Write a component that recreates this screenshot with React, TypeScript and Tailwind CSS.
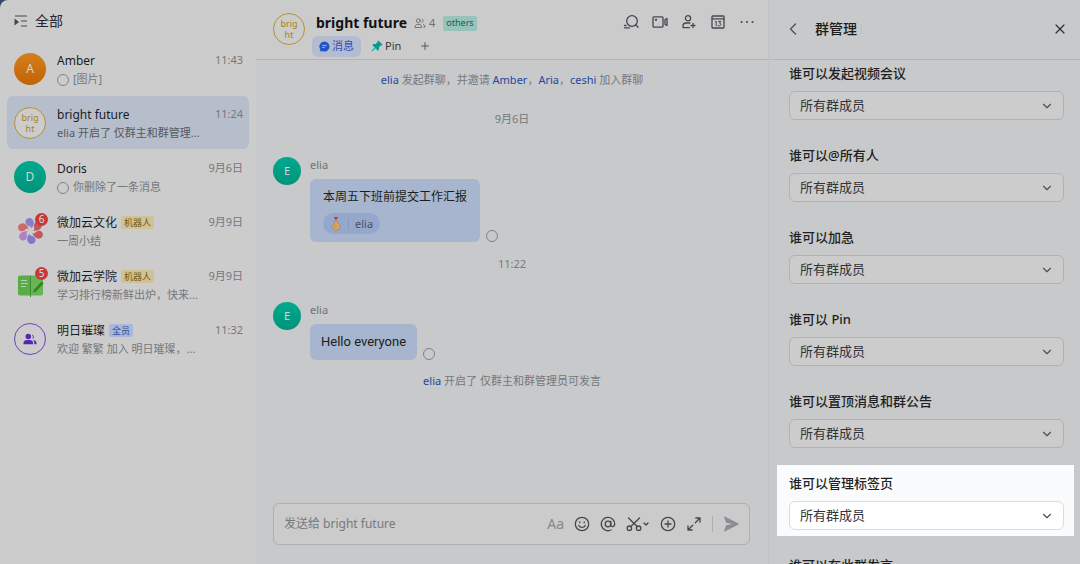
import type { ReactNode } from "react";
import { ChevronDown, ChevronLeft, Plus, X } from "lucide-react";

type Chat = {
  name: string;
  preview: string;
  time: string;
  avatar: ReactNode;
  tag?: string;
  tagClass?: string;
  badge?: number;
  ring?: boolean;
  active?: boolean;
};

const CHATS: Chat[] = [
  {
    name: "Amber",
    preview: "[图片]",
    time: "11:43",
    ring: true,
    avatar: <LetterAvatar letter="A" className="size-8 bg-linear-to-b from-[#d67e1c] to-[#c06400] text-xs" />,
  },
  {
    name: "bright future",
    preview: "elia 开启了 仅群主和群管理...",
    time: "11:24",
    active: true,
    avatar: <GroupAvatar />,
  },
  {
    name: "Doris",
    preview: "你删除了一条消息",
    time: "9月6日",
    ring: true,
    avatar: <LetterAvatar letter="D" className="size-8 bg-linear-to-b from-[#00aa8f] to-[#00937a] text-xs" />,
  },
  {
    name: "微加云文化",
    preview: "一周小结",
    time: "9月9日",
    tag: "机器人",
    tagClass: "bg-[#cfc296] text-[#71580c]",
    badge: 6,
    avatar: <FlowerLogo />,
  },
  {
    name: "微加云学院",
    preview: "学习排行榜新鲜出炉，快来...",
    time: "9月9日",
    tag: "机器人",
    tagClass: "bg-[#cfc296] text-[#71580c]",
    badge: 5,
    avatar: <BookLogo />,
  },
  {
    name: "明日璀璨",
    preview: "欢迎 繁繁 加入 明日璀璨，...",
    time: "11:32",
    tag: "全员",
    tagClass: "bg-[#a9b8d9] text-[#274a96]",
    avatar: <TeamAvatar />,
  },
];

const PERMISSIONS = [
  { id: "video", label: "谁可以发起视频会议" },
  { id: "mention", label: "谁可以@所有人" },
  { id: "urgent", label: "谁可以加急" },
  { id: "pin", label: "谁可以 Pin" },
  { id: "top", label: "谁可以置顶消息和群公告" },
  { id: "tabs", label: "谁可以管理标签页", spotlight: true },
  { id: "speak", label: "谁可以在此群发言" },
];

function LetterAvatar({ letter, className }: { letter: string; className: string }) {
  return (
    <span className={`flex shrink-0 items-center justify-center rounded-full text-[#d4d4d4] ${className}`}>
      {letter}
    </span>
  );
}

function GroupAvatar() {
  return (
    <span className="flex size-8 shrink-0 flex-col items-center justify-center rounded-full border border-[#b39332] bg-[#cccccc] text-[9px] leading-[11px] text-[#a58420]">
      <span>brig</span>
      <span>ht</span>
    </span>
  );
}

function TeamAvatar() {
  return (
    <span className="flex size-8 items-center justify-center rounded-full border border-[#6a45b8]">
      <svg viewBox="0 0 16 14" className="h-3 w-3.5" fill="#5527b5">
        <circle cx="6" cy="4" r="3.2" />
        <path d="M.4 13v-1.200c0-2.300 1.900-3.700 4.100-3.700h3c2.200 0 4.100 1.400 4.100 3.700V13z" />
        <path d="M10.200 1.800a2.800 2.800 0 0 1 .6 5.300 5 5 0 0 0-.6-5.300zM12 8.200c2 .4 3.600 1.800 3.600 3.800v1h-2.600c.1-2-.2-3.400-1.400-4.800z" />
      </svg>
    </span>
  );
}

function FlowerLogo() {
  const petals = ["#8480cb", "#c4565c", "#c4565c", "#7d7acc", "#ac84c2", "#cb6a68"];
  return (
    <svg viewBox="0 0 32 32" className="size-8">
      {petals.map((fill, i) => (
        <path
          key={i}
          d="M17.500 13.500C17.400 10.800 15.500 11.600 13.300 10.200C10.300 8.200 11 3.600 14.800 3C19.800 2.400 21.600 9 17.500 13.500z"
          fill={fill}
          transform={`rotate(${i * 60} 16.500 16)`}
        />
      ))}
    </svg>
  );
}

function BookLogo() {
  return (
    <svg viewBox="0 0 32 32" className="size-8">
      <path d="M6 6.500h10v20H6a2 2 0 0 1-2-2v-16c0-1.200.8-2 2-2z" fill="#5bab49" />
      <path d="M17 6.500h10c1.200 0 2 .8 2 2v16a2 2 0 0 1-2 2H17z" fill="#68b555" />
      <path d="M16 6.500h1V28h-1z" fill="#3f8d33" />
      <path d="M7 11.500h6M7 14.500h7M7 17.500h5" stroke="#b9cfb3" strokeWidth="1" />
      <path d="m19 24 1-3.200 7.600-8.200 2 2-7.600 8z" fill="#338326" />
    </svg>
  );
}

function Ring() {
  return <span className="size-3 shrink-0 rounded-full border border-[#7f8287]" />;
}

function ChatRow({ chat }: { chat: Chat }) {
  return (
    <li className="h-[54px] px-[7px]">
      <a
        href="#"
        className={`flex h-[53px] items-center gap-[11px] rounded-md pr-1.5 pl-[7px] ${chat.active ? "bg-[#b6becc]" : ""}`}
      >
        <span className="relative shrink-0">
          {chat.avatar}
          {chat.badge && (
            <span className="absolute -top-0.5 -right-0.5 flex size-[13px] items-center justify-center rounded-full bg-[#c5393a] text-[10px] leading-none text-[#dedede]">
              {chat.badge}
            </span>
          )}
        </span>
        <span className="flex min-w-0 flex-1 flex-col gap-[3px] pt-[3px]">
          <span className="flex h-4 items-center">
            <span className="truncate text-xs text-[#1b1c1e]">{chat.name}</span>
            {chat.tag && (
              <span className={`ml-1 flex h-[13px] items-center rounded-xs px-[3px] text-[9px] ${chat.tagClass}`}>
                {chat.tag}
              </span>
            )}
            <span className="ml-auto self-start text-[11px] leading-[14px] text-[#75787c]">{chat.time}</span>
          </span>
          <span
            className={`flex h-4 items-center gap-1 text-[11px] whitespace-nowrap ${chat.active ? "text-[#54595f]" : "text-[#75787c]"}`}
          >
            {chat.ring && <Ring />}
            {chat.preview}
          </span>
        </span>
      </a>
    </li>
  );
}

function Sidebar() {
  return (
    <aside className="w-64 shrink-0 overflow-hidden rounded-tl-lg bg-[#cccccc]">
      <header className="flex h-[42px] items-center gap-[7px] pl-3.5 text-sm text-[#26282b]">
        <svg viewBox="0 0 14 14" className="size-3.5" fill="none" stroke="#44484d" strokeWidth="1.2">
          <path d="M1 2h12M7 7h6M7 12h6" />
          <path d="M.5 4.500 5 8 .5 11.500z" fill="#44484d" stroke="none" />
        </svg>
        <h1>全部</h1>
      </header>
      <ul>
        {CHATS.map((chat) => (
          <ChatRow key={chat.name} chat={chat} />
        ))}
      </ul>
    </aside>
  );
}

function IconButton({ label, children }: { label: string; children: ReactNode }) {
  return (
    <button type="button" aria-label={label} className="flex shrink-0 items-center justify-center">
      {children}
    </button>
  );
}

function LineIcon({ children }: { children: ReactNode }) {
  return (
    <svg
      viewBox="0 0 16 16"
      className="size-4"
      fill="none"
      stroke="#44484e"
      strokeWidth="1.3"
      strokeLinecap="round"
      strokeLinejoin="round"
    >
      {children}
    </svg>
  );
}

function ChatHeader() {
  return (
    <header className="flex h-[60px] shrink-0 justify-between border-b border-[#b2b4b6] bg-[#cbcbcb] pr-[13px] pl-[17px]">
      <div className="flex items-start gap-[7px]">
        <div className="pt-[13px]">
          <GroupAvatar />
        </div>
        <div className="flex flex-col pt-3">
          <div className="flex h-[22px] items-center pl-1">
            <h2 className="text-sm font-bold text-[#111214]">bright future</h2>
            <svg
              viewBox="0 0 14 12"
              className="ml-[7px] h-2.5 w-3"
              fill="none"
              stroke="#6c7075"
              strokeWidth="1.2"
              strokeLinecap="round"
            >
              <circle cx="5" cy="3.3" r="2.3" />
              <path d="M1 11c0-2 1.200-3.300 3-3.300h2c1.800 0 3 1.300 3 3.300zM9.500 1.300a2.200 2.200 0 0 1 0 4M11 7.500c1.300.4 2 1.500 2 3.400h-1.500" />
            </svg>
            <span className="ml-[3px] text-[11px] text-[#6c7075]">4</span>
            <span className="ml-2 flex h-[15px] items-center rounded-xs bg-[#97c3ba] px-[3px] text-[9px] text-[#0a6557]">
              others
            </span>
          </div>
          <nav className="mt-px flex h-[22px] items-center gap-2 text-[11px]">
            <a href="#" className="flex h-[21px] items-center gap-0.5 rounded-md bg-[#b4bcd1] px-[7px] text-[#2b52b5]">
              <svg viewBox="0 0 12 12" className="size-[11px]">
                <path d="M6 .5a5.500 5.500 0 1 1-1.500 10.800H.8l.7-2A5.500 5.500 0 0 1 6 .5z" fill="#2654c4" />
                <path d="M3.500 4.800h5M3.500 7h3" stroke="#b4bcd1" strokeWidth="1" />
              </svg>
              消息
            </a>
            <a href="#" className="flex items-center gap-0.5 pr-1 pl-0.5 text-[#34373b]">
              <svg viewBox="0 0 12 12" className="size-3" fill="#00a08a">
                <path d="M7.300.4 11.600 4.700l-1 .8-.8-.1-1.900 2 .1 2.400-1 .9-2.500-2.500L1.100 11.500l-.6-.6 3.300-3.400L1.300 5l.9-1 2.400.1 2-1.900-.1-.8z" />
              </svg>
              Pin
            </a>
            <IconButton label="添加标签页">
              <Plus className="ml-1.5 size-3" color="#55595e" strokeWidth={2} />
            </IconButton>
          </nav>
        </div>
      </div>
      <div className="flex h-11 items-center gap-[13px]">
        <IconButton label="搜索">
          <LineIcon>
            <circle cx="9" cy="7" r="5.300" />
            <path d="m12.800 10.800 2.200 2.400M1.500 11.500H3M1.500 13.800h5" />
          </LineIcon>
        </IconButton>
        <IconButton label="视频会议">
          <LineIcon>
            <rect x="1" y="2.800" width="10" height="10.400" rx="1" />
            <path d="M13 5.500 15 4.500v7l-2-1z" />
            <circle cx="4" cy="5.800" r=".5" fill="#44484e" />
          </LineIcon>
        </IconButton>
        <IconButton label="添加成员">
          <LineIcon>
            <circle cx="7" cy="4.300" r="2.600" />
            <path d="M8.500 13.600H2V12c0-1.700 1.200-3 2.900-3h4M12 9.500v4M10 11.500h4" />
          </LineIcon>
        </IconButton>
        <IconButton label="日历">
          <LineIcon>
            <rect x="2" y="2" width="12" height="12" rx=".8" />
            <path d="M2 4.800h12" />
            <path d="m5.300 7.800.9-.5v4.400M8.500 7.400h2.300L9.500 9.200c1.900 0 1.800 2.500 0 2.500H8.300" strokeWidth="1" />
          </LineIcon>
        </IconButton>
        <IconButton label="更多">
          <svg viewBox="0 0 16 16" className="size-4" fill="#44484e">
            <circle cx="2.500" cy="8" r="1" />
            <circle cx="8" cy="8" r="1" />
            <circle cx="13.500" cy="8" r="1" />
          </svg>
        </IconButton>
      </div>
    </header>
  );
}

function Name({ children }: { children: ReactNode }) {
  return (
    <a href="#" className="text-[#2348a0]">
      {children}
    </a>
  );
}

function Message({ children }: { children: ReactNode }) {
  return (
    <article className="flex items-start gap-[9px] px-[17px]">
      <LetterAvatar letter="E" className="size-7 bg-linear-to-b from-[#00aa8f] to-[#00937a] text-[11px]" />
      <div className="flex flex-col gap-1.5">
        <span className="text-[11px] leading-4 text-[#6f7276]">elia</span>
        <div className="flex items-end gap-1.5">
          {children}
          <Ring />
        </div>
      </div>
    </article>
  );
}

function FingerHeart() {
  return (
    <svg viewBox="0 0 14 18" className="h-[15px] w-3">
      <path d="M7 4.500C3.500 2.600 4.800.3 7 1.500 9.300.3 10.500 2.600 7 4.500z" fill="#c2303a" />
      <path
        d="M6.500 5.200c1-.5 1.800.2 1.900 1.500l.3 2c2 .5 2.800 1.700 3 3.300l.7 2.600-4.600 2.600c-2.900.2-5.300-1.300-5.400-3.300-.1-2.500 1.900-2.700 2.400-4.500z"
        fill="#dba562"
        stroke="#a8703a"
        strokeWidth=".6"
      />
      <path d="M5 11.500c1.800-.3 2.600.3 3.300 1.200M4.500 13.800c1.500-.2 2.400.2 3 1" fill="none" stroke="#a8703a" strokeWidth=".6" />
    </svg>
  );
}

function Timeline() {
  return (
    <div className="flex min-h-0 flex-1 flex-col overflow-hidden text-[11px] text-[#75787c]">
      <p className="mt-3 text-center leading-4">
        <Name>elia</Name> 发起群聊，并邀请 <Name>Amber</Name>，<Name>Aria</Name>，<Name>ceshi</Name> 加入群聊
      </p>
      <time className="mt-[23px] self-center px-1.5 leading-4">9月6日</time>
      <div className="mt-[30px]">
        <Message>
          <div className="rounded-md bg-[#a7b6ce] px-[13px] py-2">
            <p className="text-xs leading-5 text-[#1b1d20]">本周五下班前提交工作汇报</p>
            <button
              type="button"
              className="mt-1.5 flex h-[21px] items-center gap-1.5 rounded-full bg-[#95a7cd] px-[7px] text-[11px] text-[#4c525c]"
            >
              <FingerHeart />
              <span className="border-l border-[#8b9bbd] pl-1.5 leading-3">elia</span>
            </button>
          </div>
        </Message>
      </div>
      <time className="mt-3.5 self-center leading-4">11:22</time>
      <div className="mt-[30px]">
        <Message>
          <p className="rounded-md bg-[#a7b6ce] px-[11px] py-2 font-['Roboto'] text-[13px] leading-5 text-[#1b1d20]">
            Hello everyone
          </p>
        </Message>
      </div>
      <p className="mt-[13px] text-center leading-4">
        <Name>elia</Name> 开启了 仅群主和群管理员可发言
      </p>
    </div>
  );
}

function Composer() {
  return (
    <form className="mr-[18px] mb-[19px] ml-[17px] flex h-[42px] shrink-0 items-center gap-2.5 rounded-md border border-[#adafb1] bg-[#cbcbcb] px-2.5 text-[#44484e]">
      <input
        type="text"
        aria-label="消息"
        placeholder="发送给 bright future"
        className="min-w-0 flex-1 text-xs outline-none placeholder:text-[#75787c]"
      />
      <button type="button" aria-label="文字格式" className="text-sm text-[#85888c]">
        Aa
      </button>
      <IconButton label="表情">
        <LineIcon>
          <circle cx="8" cy="8" r="6.700" />
          <path d="M5.800 5.800v1M10.200 5.800v1M4.800 9.500c1.200 2.500 5.200 2.500 6.400 0" />
        </LineIcon>
      </IconButton>
      <IconButton label="提及">
        <LineIcon>
          <circle cx="8" cy="8" r="2.800" />
          <path d="M10.800 5.300V9c0 2.300 3.900 2.200 3.900-1A6.700 6.700 0 1 0 11 14" />
        </LineIcon>
      </IconButton>
      <IconButton label="截图">
        <LineIcon>
          <circle cx="3.400" cy="12.200" r="2.200" />
          <circle cx="12.600" cy="12.200" r="2.200" />
          <path d="M2.500 2 11.200 10.500M13.500 2 4.800 10.500" />
        </LineIcon>
        <ChevronDown className="size-2" strokeWidth={4} />
      </IconButton>
      <IconButton label="更多操作">
        <LineIcon>
          <circle cx="8" cy="8" r="6.700" />
          <path d="M8 5v6M5 8h6" />
        </LineIcon>
      </IconButton>
      <IconButton label="展开">
        <LineIcon>
          <path d="M9.800 2h4.200v4.200M14 2 9.300 6.700M6.200 14H2V9.800M2 14l4.700-4.700" />
        </LineIcon>
      </IconButton>
      <span className="h-4 w-px bg-[#adafb1]" />
      <IconButton label="发送">
        <svg viewBox="0 0 16 16" className="size-4" fill="#8b8e92">
          <path d="M1.200 1.600c-.3-.8.3-1.200 1-.9l12.900 6.500c.7.4.7 1.200 0 1.600L2.200 15.300c-.7.3-1.300-.1-1-.9L3.200 9.200 9.500 8 3.200 6.800z" />
        </svg>
      </IconButton>
    </form>
  );
}

function Permission({ id, label, spotlight }: { id: string; label: string; spotlight?: boolean }) {
  return (
    <div
      className={`flex shrink-0 flex-col gap-2 pt-2 pr-2.5 pb-1.5 pl-3 first:pt-[3px] ${spotlight ? "bg-[#fafbfd]" : ""}`}
    >
      <label htmlFor={id} className="text-[13px] leading-5 font-medium text-[#1d1f22]">
        {label}
      </label>
      <div className="relative">
        <select
          id={id}
          className={`h-[29px] w-full appearance-none rounded-md border px-2.5 text-[13px] text-[#303337] ${
            spotlight ? "border-[#d9dbde] bg-white" : "border-[#b0b2b4] bg-[#cccccc]"
          }`}
        >
          <option>所有群成员</option>
        </select>
        <ChevronDown className="pointer-events-none absolute top-2 right-2.5 size-3.5" color="#4d5157" />
      </div>
    </div>
  );
}

function SettingsPanel() {
  return (
    <aside className="flex w-[312px] shrink-0 flex-col overflow-hidden border-l border-[#c0c2c4]">
      <header className="flex h-[60px] shrink-0 items-center border-b border-[#b2b4b6] pr-3 pb-0.5 pl-3.5">
        <IconButton label="返回">
          <ChevronLeft className="size-5" color="#4d5157" strokeWidth={1.6} />
        </IconButton>
        <h2 className="ml-3 text-sm font-medium text-[#1b1d20]">群管理</h2>
        <span className="ml-1 h-2.5 w-px bg-[#bbbdbf]" />
        <span className="flex-1" />
        <IconButton label="关闭">
          <X className="size-4" color="#2c2f33" strokeWidth={1.8} />
        </IconButton>
      </header>
      <div className="flex min-h-0 flex-1 flex-col gap-[11px] overflow-hidden pr-1.5 pl-2">
        {PERMISSIONS.map((item) => (
          <Permission key={item.id} {...item} />
        ))}
      </div>
    </aside>
  );
}

export default function App() {
  return (
    <div className="flex h-screen overflow-hidden bg-[#35466b] font-['Noto_Sans','Noto_Sans_CJK_SC',sans-serif]">
      <Sidebar />
      <div className="flex min-w-0 flex-1 bg-[#c8c9ca]">
        <main className="flex min-w-0 flex-1 flex-col">
          <ChatHeader />
          <Timeline />
          <Composer />
        </main>
        <SettingsPanel />
      </div>
    </div>
  );
}
